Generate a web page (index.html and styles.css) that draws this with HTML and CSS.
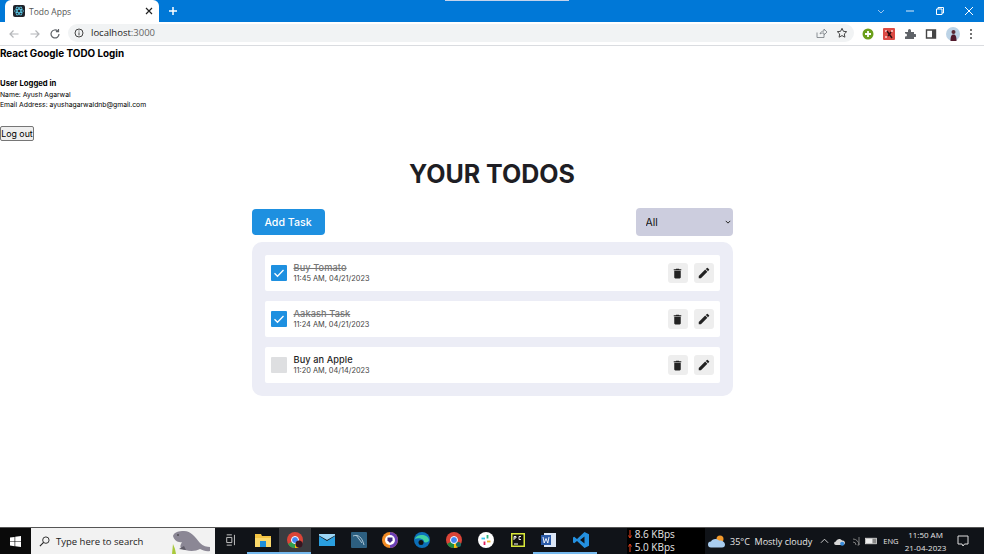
FILE: index.html
```html
<!DOCTYPE html>
<html lang="en">
<head>
<meta charset="utf-8">
<title>Todo Apps</title>
<link rel="stylesheet" href="styles.css">
</head>
<body>
<div class="chrome">
  <div class="tabstrip">
    <div class="tab">
      <svg class="favicon" viewBox="0 0 12 12" width="12" height="12"><rect width="12" height="12" rx="2" fill="#20232a"/><g fill="none" stroke="#61dafb" stroke-width=".7"><ellipse cx="6" cy="6" rx="4.6" ry="1.8"/><ellipse cx="6" cy="6" rx="4.6" ry="1.8" transform="rotate(60 6 6)"/><ellipse cx="6" cy="6" rx="4.6" ry="1.8" transform="rotate(120 6 6)"/></g></svg>
      <span class="tab-title">Todo Apps</span>
      <svg class="tab-close" viewBox="0 0 8 8" width="8" height="8"><path d="M1 1l6 6M7 1L1 7" stroke="#222" stroke-width="1.2"/></svg>
    </div>
    <svg class="new-tab" viewBox="0 0 10 10" width="10" height="10"><path d="M5 1v8M1 5h8" stroke="#fff" stroke-width="1.5"/></svg>
    <div class="notch"></div>
    <div class="window-controls">
      <svg viewBox="0 0 10 10" width="10" height="10"><path d="M2 4l3 3 3-3" fill="none" stroke="#9cc4ee" stroke-width="1"/></svg>
      <svg viewBox="0 0 10 10" width="10" height="10"><path d="M1 5h8" stroke="#dcebfa" stroke-width="1"/></svg>
      <svg viewBox="0 0 10 10" width="10" height="10"><path d="M1.5 3h5.500v5.500h-5.500zM3 3V1.500h5.500V7H7" fill="none" stroke="#fff" stroke-width="1"/></svg>
      <svg viewBox="0 0 10 10" width="10" height="10"><path d="M1 1l8 8M9 1L1 9" stroke="#fff" stroke-width="1"/></svg>
    </div>
  </div>
  <div class="toolbar">
    <svg class="nav-icon" viewBox="0 0 12 12" width="12" height="12"><path d="M10.500 6H2M5.500 2.500L2 6l3.500 3.500" fill="none" stroke="#b4b6b9" stroke-width="1.200"/></svg>
    <svg class="nav-icon" viewBox="0 0 12 12" width="12" height="12"><path d="M1.500 6H10M6.500 2.500L10 6 6.500 9.500" fill="none" stroke="#b4b6b9" stroke-width="1.200"/></svg>
    <svg class="nav-icon" viewBox="0 0 12 12" width="12" height="12"><path d="M10 6a4 4 0 1 1-1.200-2.900M9.500 1v2.600H6.900" fill="none" stroke="#5f6368" stroke-width="1.200"/></svg>
    <div class="omnibox">
      <svg viewBox="0 0 10 10" width="10" height="10"><circle cx="5" cy="5" r="4" fill="none" stroke="#444" stroke-width="1"/><path d="M5 4.400v3M5 2.500v1" stroke="#444" stroke-width="1"/></svg>
      <span class="url">localhost<span class="url-port">:3000</span></span>
      <span class="omni-spacer"></span>
      <svg viewBox="0 0 12 12" width="12" height="12"><path d="M2 5.500V10.500h7V8M5 7c.5-2 2-3 4-3V2l3 3-3 3V6c-2 0-3 .2-4 1z" fill="none" stroke="#80868b" stroke-width=".9"/></svg>
      <svg viewBox="0 0 12 12" width="12" height="12"><path d="M6 1.300l1.400 3 3.300.4-2.400 2.200.6 3.300L6 8.600 3.100 10.200l.6-3.300-2.400-2.200 3.300-.4z" fill="none" stroke="#444" stroke-width="1"/></svg>
    </div>
    <div class="extensions">
      <svg viewBox="0 0 12 12" width="12" height="12"><circle cx="6" cy="6" r="5.500" fill="#6b9f1a"/><path d="M6 3v6M3 6h6" stroke="#fff" stroke-width="1.800"/></svg>
      <svg viewBox="0 0 12 12" width="12" height="12"><rect width="12" height="12" rx="1" fill="#dc4a44"/><path d="M2 2h2v2H2zM8 2h2v2H8zM2 8h2v2H2z" fill="#f3b0ac"/><path d="M4 3l5 7M8 4L5 8" stroke="#311" stroke-width="1.500"/></svg>
      <svg viewBox="0 0 12 12" width="12" height="12"><path d="M1 4h3V2.500a1.500 1.500 0 0 1 3 0V4h3v2h1a1.500 1.500 0 0 1 0 3h-1v2H1V8.500h.500a1.500 1.500 0 0 0 0-3H1z" fill="#5f6368"/></svg>
      <svg viewBox="0 0 12 12" width="12" height="12"><path d="M1.500 2h9v8h-9z" fill="none" stroke="#444" stroke-width="1.400"/><path d="M7 2h3.500v8H7z" fill="#444"/></svg>
      <svg class="avatar" viewBox="0 0 14 14" width="14" height="14"><circle cx="7" cy="7" r="7" fill="#bcd3e6"/><circle cx="7.500" cy="5" r="2" fill="#5b2a35"/><path d="M4.500 14c0-5 1-6.500 3-6.500s3 1.500 3 6.500z" fill="#521a2c"/></svg>
      <svg viewBox="0 0 4 12" width="4" height="12"><circle cx="2" cy="2" r="1" fill="#444"/><circle cx="2" cy="6" r="1" fill="#444"/><circle cx="2" cy="10" r="1" fill="#444"/></svg>
    </div>
  </div>
</div>

<main class="page">
  <h1 class="app-title">React Google TODO Login</h1>
  <section class="user">
    <h2 class="user-heading">User Logged in</h2>
    <p class="user-line">Name: Ayush Agarwal</p>
    <p class="user-line">Email Address: ayushagarwaldnb@gmail.com</p>
  </section>
  <button class="logout" type="button">Log out</button>
  <h2 class="todos-title">YOUR TODOS</h2>
  <div class="todos">
    <div class="todos-head">
      <button class="add-task" type="button">Add Task</button>
      <div class="filter-wrap">
        <select class="filter"><option>All</option><option>Incomplete</option><option>Complete</option></select>
        <svg class="filter-arrow" viewBox="0 0 8 5" width="6" height="4"><path d="M1 1l3 3 3-3" fill="none" stroke="#222" stroke-width="1.300"/></svg>
      </div>
    </div>
    <div class="todo-panel">
      <div class="todo">
        <span class="check is-done"><svg viewBox="0 0 16 16" width="16" height="16"><path d="M3.500 8.300l3 3 6-6.300" fill="none" stroke="#fff" stroke-width="1.300"/></svg></span>
        <div class="todo-text"><div class="todo-name is-struck">Buy Tomato</div><div class="todo-time">11:45 AM, 04/21/2023</div></div>
        <button class="icon-btn" type="button" aria-label="Delete"><svg viewBox="0 0 24 24" width="13" height="13"><path d="M6 19c0 1.100.9 2 2 2h8c1.100 0 2-.9 2-2V7H6v12zM19 4h-3.500l-1-1h-5l-1 1H5v2h14V4z" fill="#222"/></svg></button>
        <button class="icon-btn" type="button" aria-label="Edit"><svg viewBox="0 0 24 24" width="14" height="14"><path d="M3 17.250V21h3.750L17.810 9.940l-3.750-3.750L3 17.250zM20.710 7.040a1 1 0 0 0 0-1.410l-2.340-2.340a1 1 0 0 0-1.410 0l-1.830 1.830 3.750 3.750 1.830-1.830z" fill="#222"/></svg></button>
      </div>
      <div class="todo">
        <span class="check is-done"><svg viewBox="0 0 16 16" width="16" height="16"><path d="M3.500 8.300l3 3 6-6.300" fill="none" stroke="#fff" stroke-width="1.300"/></svg></span>
        <div class="todo-text"><div class="todo-name is-struck">Aakash Task</div><div class="todo-time">11:24 AM, 04/21/2023</div></div>
        <button class="icon-btn" type="button" aria-label="Delete"><svg viewBox="0 0 24 24" width="13" height="13"><path d="M6 19c0 1.100.9 2 2 2h8c1.100 0 2-.9 2-2V7H6v12zM19 4h-3.500l-1-1h-5l-1 1H5v2h14V4z" fill="#222"/></svg></button>
        <button class="icon-btn" type="button" aria-label="Edit"><svg viewBox="0 0 24 24" width="14" height="14"><path d="M3 17.250V21h3.750L17.810 9.940l-3.750-3.750L3 17.250zM20.710 7.040a1 1 0 0 0 0-1.410l-2.340-2.340a1 1 0 0 0-1.410 0l-1.830 1.830 3.750 3.750 1.830-1.830z" fill="#222"/></svg></button>
      </div>
      <div class="todo">
        <span class="check"></span>
        <div class="todo-text"><div class="todo-name">Buy an Apple</div><div class="todo-time">11:20 AM, 04/14/2023</div></div>
        <button class="icon-btn" type="button" aria-label="Delete"><svg viewBox="0 0 24 24" width="13" height="13"><path d="M6 19c0 1.100.9 2 2 2h8c1.100 0 2-.9 2-2V7H6v12zM19 4h-3.500l-1-1h-5l-1 1H5v2h14V4z" fill="#222"/></svg></button>
        <button class="icon-btn" type="button" aria-label="Edit"><svg viewBox="0 0 24 24" width="14" height="14"><path d="M3 17.250V21h3.750L17.810 9.940l-3.750-3.750L3 17.250zM20.710 7.040a1 1 0 0 0 0-1.410l-2.340-2.340a1 1 0 0 0-1.410 0l-1.830 1.830 3.750 3.750 1.830-1.830z" fill="#222"/></svg></button>
      </div>
    </div>
  </div>
</main>

<footer class="taskbar">
  <div class="start"><svg viewBox="0 0 12 12" width="11" height="11"><path d="M0 1.700l5-.7v4.700H0zM5.700.9L12 0v5.700H5.700zM0 6.400h5v4.700l-5-.7zM5.700 6.400H12V12l-6.300-.9z" fill="#fff"/></svg></div>
  <div class="search">
    <svg viewBox="0 0 12 12" width="11" height="11"><circle cx="7.500" cy="4.500" r="3.500" fill="none" stroke="#222" stroke-width="1"/><path d="M5 7l-4 4" stroke="#222" stroke-width="1.200"/></svg>
    <span class="search-text">Type here to search</span>
    <svg class="manatee" viewBox="0 0 40 24" width="40" height="24"><path d="M2 6C3 2 8 1 13 1c7 0 11 6 16 12 3 3 7 4 10 4v4c-4 1-7-1-10-2-5 3-14 2-18 0-3-2-1-5 0-7-4 1-8-2-9-6z" fill="#8b8795"/><path d="M13 16l-5 3 7 1z" fill="#5f5c68"/><circle cx="7" cy="5" r=".8" fill="#222"/><path d="M1 24l1-10 2 5 1 5z" fill="#a9c93c"/></svg>
  </div>
  <div class="task-icons">
    <span class="task-icon"><svg viewBox="0 0 14 14" width="12" height="12"><path d="M2 1h6M2 13h6M2 4h6v6H2zM11 1v12" fill="none" stroke="#ddd" stroke-width="1"/></svg></span>
    <span class="task-icon is-open"><svg viewBox="0 0 16 14" width="16" height="14"><path d="M0 1h6l1 2h9v11H0z" fill="#f3c443"/><path d="M0 5h16v9H0z" fill="#fbd96b"/><path d="M5 8h6v6H5z" fill="#1f8fd9"/></svg></span>
    <span class="task-icon is-active"><svg viewBox="0 0 16 16" width="16" height="16"><circle cx="8" cy="8" r="8" fill="#db4437"/><path d="M8 8L1 12a8 8 0 0 0 7 4z" fill="#2e9e4f"/><path d="M8 8l7 4a8 8 0 0 1-7 4z" fill="#f4c20d"/><circle cx="8" cy="8" r="3.500" fill="#4285f4" stroke="#fff"/><circle cx="12" cy="12" r="3.500" fill="#3a1520"/></svg></span>
    <span class="task-icon"><svg viewBox="0 0 16 14" width="16" height="14"><path d="M0 3l8 5 8-5v10H0z" fill="#2a9fe0"/><path d="M0 1h16v1.500L8 7 0 2.500z" fill="#9ed6f5"/></svg></span>
    <span class="task-icon"><svg viewBox="0 0 16 16" width="16" height="16"><rect width="16" height="16" rx="1" fill="#2d5f80"/><path d="M2 4c5-2 9 1 11 9M5 3l6 8" fill="none" stroke="#b9cfdd" stroke-width=".9"/></svg></span>
    <span class="task-icon"><svg viewBox="0 0 16 16" width="16" height="16"><circle cx="8" cy="8" r="8" fill="#f08a24"/><path d="M8 0a8 8 0 0 1 8 8 8 8 0 0 1-8 8z" fill="#6b3fb5"/><circle cx="8" cy="8" r="5" fill="#fff"/><path d="M5.500 5.500h5v3L8 11 5.500 8.500z" fill="#3d2a80"/></svg></span>
    <span class="task-icon"><svg viewBox="0 0 16 16" width="16" height="16"><circle cx="8" cy="8" r="8" fill="#0c6fb8"/><path d="M1 7c1-5 13-6 14 1 0 2-3 3-5 2 1-3-6-5-9-3z" fill="#3fd0a3"/><circle cx="7" cy="10.500" r="2.500" fill="#111"/></svg></span>
    <span class="task-icon"><svg viewBox="0 0 16 16" width="16" height="16"><circle cx="8" cy="8" r="8" fill="#db4437"/><path d="M8 8L1 12a8 8 0 0 0 7 4z" fill="#1f8a44"/><path d="M8 8l7 4a8 8 0 0 1-7 4z" fill="#f4c20d"/><circle cx="8" cy="8" r="3.500" fill="#4285f4" stroke="#fff"/><circle cx="12.500" cy="12.500" r="2.500" fill="#1a6b66"/></svg></span>
    <span class="task-icon"><svg viewBox="0 0 16 16" width="16" height="16"><circle cx="8" cy="8" r="8" fill="#fff"/><path d="M3.500 6.500H7" stroke="#36c5f0" stroke-width="1.800"/><path d="M9.500 3v3.500" stroke="#2eb67d" stroke-width="1.800"/><path d="M12.500 9.500H9" stroke="#ecb22e" stroke-width="1.800"/><path d="M6.500 13V9.500" stroke="#e01e5a" stroke-width="1.800"/></svg></span>
    <span class="task-icon"><svg viewBox="0 0 14 14" width="14" height="14"><rect width="14" height="14" fill="#d9e83a"/><rect x="1.500" y="1.500" width="11" height="11" fill="#111"/><path d="M3 11h4" stroke="#fff" stroke-width="1"/><path d="M3 7V3.500h2v1.500H3M10 3.500H8v3h2" fill="none" stroke="#fff" stroke-width=".9"/></svg></span>
    <span class="task-icon is-open"><svg viewBox="0 0 16 16" width="16" height="16"><path d="M3 1h12v14H3z" fill="#dce6f6"/><path d="M0 3h10v10H0z" fill="#2a5aa8"/><path d="M2 5l1.200 6L5 6.500 6.800 11 8 5" fill="none" stroke="#fff" stroke-width=".9"/></svg></span>
    <span class="task-icon is-open"><svg viewBox="0 0 16 16" width="16" height="16"><path d="M11.500 0L16 2.200v11.600L11.500 16 4 9 1.200 11.200 0 10.400V5.600l1.200-.8L4 7zM11.500 4.500L7 8l4.500 3.500z" fill="#2490df"/></svg></span>
  </div>
  <div class="netspeed">
    <div class="net-line"><svg class="net-arrow" viewBox="0 0 4 9" width="4" height="9"><path d="M2 0v7M.5 5.500L2 8l1.500-2.500" fill="none" stroke="#e8401c" stroke-width="1"/></svg> 8.6 KBps</div>
    <div class="net-line"><svg class="net-arrow" viewBox="0 0 4 9" width="4" height="9"><path d="M2 9V2M.5 3.500L2 1l1.500 2.500" fill="none" stroke="#e8401c" stroke-width="1"/></svg> 5.0 KBps</div>
  </div>
  <div class="weather">
    <svg viewBox="0 0 18 14" width="18" height="14"><circle cx="12" cy="5" r="3.500" fill="#f39a2c"/><path d="M3 13.500a3 3 0 0 1 0-6c1-3 6-3.500 8-1 3-.5 6 1.500 6 4 0 2-1 3-3 3z" fill="#a9cdf0"/></svg>
    <span>35°C&nbsp; Mostly cloudy</span>
  </div>
  <div class="tray">
    <svg viewBox="0 0 10 6" width="9" height="6"><path d="M1 5l4-4 4 4" fill="none" stroke="#ddd" stroke-width="1"/></svg>
    <svg viewBox="0 0 12 10" width="11" height="9"><path d="M2 9a2 2 0 0 1 0-4c1-3 5-4 7-1a2.500 2.500 0 0 1 1 5z" fill="#d8d8d8"/><circle cx="9" cy="7.500" r="2.300" fill="#3a8ddd"/></svg>
    <svg viewBox="0 0 10 10" width="10" height="10"><path d="M9 9H7.500M9 9V1M6 9a3 3 0 0 0-3-3M9 9a6 6 0 0 0-6-6" fill="none" stroke="#8a8a8a" stroke-width=".9"/></svg>
    <svg viewBox="0 0 14 8" width="13" height="8"><rect x=".5" y="1" width="12" height="6" fill="#888" stroke="#ddd" stroke-width=".8"/><rect x="1" y="1.500" width="7" height="5" fill="#eee"/></svg>
    <span class="lang">ENG</span>
  </div>
  <div class="clock"><div>11:50 AM</div><div>21-04-2023</div></div>
  <div class="notify"><svg viewBox="0 0 12 12" width="12" height="12"><path d="M1 1h10v8H7.500L6 11 5 9H1z" fill="none" stroke="#ddd" stroke-width="1"/></svg></div>
</footer>
</body>
</html>
```

FILE: styles.css
```css
* { box-sizing: border-box; }
html, body { height: 100%; }
body {
  margin: 0;
  display: flex;
  flex-direction: column;
  height: 554px;
  overflow: hidden;
  background: #fff;
  font-family: "Inter", "Liberation Sans", sans-serif;
  color: #000;
}

/* Browser frame */
.chrome { flex: none; font-family: "Open Sans", "Liberation Sans", sans-serif; }
.tabstrip {
  height: 22px;
  background: #0078d7;
  display: flex;
  align-items: center;
  padding-left: 5px;
  position: relative;
}
.tab {
  width: 154px;
  height: 22px;
  background: #fff;
  border-radius: 6px 6px 0 0;
  display: flex;
  align-items: center;
  padding: 0 6px 0 8px;
  gap: 4px;
}
.favicon { flex: none; }
.tab-title { font-size: 8.500px; color: #555; flex: 1; }
.new-tab { margin-left: 9px; }
.notch {
  position: absolute;
  left: 445px;
  top: 0;
  width: 124px;
  height: 1px;
  background: #c4d3ec;
}
.window-controls {
  margin-left: auto;
  display: flex;
  align-items: center;
  gap: 19.500px;
  padding-right: 10px;
}
.window-controls svg { display: block; }
.toolbar {
  height: 24px;
  background: #fff;
  border-bottom: 1px solid #dadce0;
  display: flex;
  align-items: center;
  padding-left: 8px;
}
.nav-icon { margin-right: 8.500px; }
.omnibox {
  width: 786px;
  height: 18px;
  margin-left: -1.500px;
  background: #f1f3f4;
  border-radius: 9px;
  display: flex;
  align-items: center;
  gap: 9px;
  padding: 0 6px 0 6px;
  margin-top: -2px;
}
.url { font-size: 9.500px; color: #222; margin-left: -2px; }
.url-port { color: #666; }
.omni-spacer { flex: 1; }
.extensions {
  display: flex;
  align-items: center;
  gap: 9px;
  margin-left: 8px;
}
.avatar { flex: none; margin: 0; }

/* Page */
.page {
  flex: 1;
  min-height: 0;
  overflow: hidden;
}
.app-title {
  margin: 0;
  height: 14px;
  font-size: 9.900px;
  line-height: 14px;
  font-weight: 700;
}
.user { margin-top: 18px; }
.user-heading {
  margin: 0;
  font-size: 7.700px;
  line-height: 10px;
  font-weight: 700;
  padding-top: 1px;
}
.user-line {
  margin: 0;
  font-size: 6.800px;
  line-height: 9.500px;
  padding-top: .5px;
}
.logout {
  display: block;
  margin: 17px 0 0;
  width: 34px;
  height: 15px;
  padding: 0;
  font-family: "Inter", sans-serif;
  font-size: 8.800px;
  line-height: 13px;
  white-space: nowrap;
  background: #efefef;
  border: 1px solid #767676;
  border-radius: 2px;
  color: #000;
}
.todos-title {
  margin: 17px 0 0;
  text-align: center;
  font-size: 25px;
  line-height: 32px;
  font-weight: 700;
  color: #1e1e24;
}
.todos { width: 481px; margin: 18px auto 0; }
.todos-head {
  display: flex;
  justify-content: space-between;
  align-items: center;
  height: 28px;
}
.add-task {
  width: 73px;
  height: 26px;
  border: 0;
  border-radius: 4px;
  background: #1e90e0;
  color: #fff;
  font-family: "Inter", sans-serif;
  font-size: 10.600px;
  font-weight: 500;
  padding: 0;
}
.filter-wrap { position: relative; width: 97px; height: 28px; }
.filter {
  display: block;
  appearance: none;
  width: 97px;
  height: 28px;
  border: 0;
  border-radius: 4px;
  background: #cccdde;
  color: #111;
  font-family: "Inter", sans-serif;
  font-size: 10.500px;
  padding: 0 0 0 10px;
}
.filter-arrow { position: absolute; right: 2px; top: 12px; }
.todo-panel {
  margin-top: 6px;
  height: 154px;
  background: #ecedf6;
  border-radius: 10px;
  padding: 13px;
  display: flex;
  flex-direction: column;
  gap: 10px;
}
.todo {
  height: 36px;
  background: #fff;
  border-radius: 2px;
  display: flex;
  align-items: center;
  padding: 0 6px;
}
.check {
  flex: none;
  width: 16px;
  height: 16px;
  border-radius: 1px;
  background: #dedfe1;
  display: block;
}
.check svg { display: block; }
.is-done { background: #1e90e0; }
.todo-text { flex: 1; margin-left: 7px; }
.todo-name {
  font-size: 9.200px;
  line-height: 12px;
  font-weight: 500;
  color: #1e1e24;
  letter-spacing: .1px;
}
.is-struck { color: #777; text-decoration: line-through; }
.todo-time {
  font-size: 7.400px;
  line-height: 10px;
  color: #444;
}
.icon-btn {
  flex: none;
  width: 20px;
  height: 20px;
  margin-left: 6px;
  padding: 0;
  border: 0;
  border-radius: 3px;
  background: #eeeeee;
  display: flex;
  align-items: center;
  justify-content: center;
}

/* Taskbar */
.taskbar {
  flex: none;
  height: 27px;
  background: #101318;
  border-top: 1px solid #555;
  display: flex;
  align-items: center;
  font-family: "Open Sans", "Liberation Sans", sans-serif;
  color: #e6e6e6;
  font-size: 9px;
}
.start {
  width: 31px;
  height: 26px;
  display: flex;
  align-items: center;
  justify-content: center;
  background: #0a0a0a;
}
.search {
  width: 184px;
  height: 26px;
  background: #f2f2f2;
  display: flex;
  align-items: center;
  padding-left: 8px;
  position: relative;
  overflow: hidden;
}
.search-text { margin-left: 6px; font-size: 9.500px; color: #222; }
.manatee { position: absolute; right: 4px; top: 2px; }
.task-icons { display: flex; height: 26px; margin-left: .5px; }
.task-icon {
  width: 31.800px;
  height: 26px;
  display: flex;
  align-items: center;
  justify-content: center;
  border-bottom: 2px solid transparent;
}
.is-open { border-bottom-color: #76b9ed; }
.is-active { background: #3a3c40; border-bottom-color: #76b9ed; }
.netspeed {
  width: 78px;
  height: 26px;
  margin-left: 30px;
  background: #000;
  font-size: 10px;
  line-height: 13px;
  padding-left: 1px;
}
.net-line { white-space: nowrap; }
.net-arrow { vertical-align: -1px; }
.weather {
  display: flex;
  align-items: center;
  gap: 4px;
  margin-left: 3px;
  font-size: 9px;
  white-space: nowrap;
}
.tray {
  display: flex;
  align-items: center;
  gap: 5px;
  margin-left: 8px;
}
.lang { font-size: 7.500px; }
.clock {
  margin-left: 5px;
  width: 44px;
  text-align: center;
  font-size: 8px;
  line-height: 13px;
}
.notify { margin-left: 9px; display: flex; }
```
